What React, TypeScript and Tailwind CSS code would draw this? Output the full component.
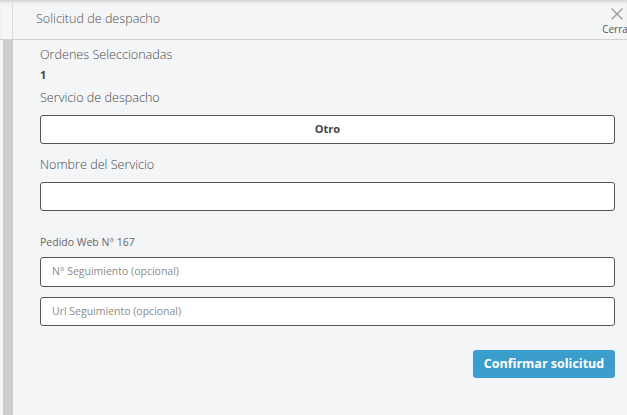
export default function App() {
  return (
    <div className="w-[627px] h-[415px] overflow-hidden bg-[#f4f5f7] text-[#5c5c5c] font-['Open_Sans',sans-serif] flex flex-col">
      {/* header */}
      <div className="h-[40px] shrink-0 flex border-b border-[#d2d2d2] shadow-[inset_0_3px_3px_-1px_rgba(0,0,0,0.14)]">
        <div className="w-[13px] h-full border-r border-[#d9d9d9] mt-[3px]" />
        <div className="flex-1 pl-[23px] pt-[10px] text-[12.6px] leading-[18px] font-light text-[#4f4f4f]">Solicitud de despacho</div>
        <div className="w-[30px] shrink-0 -mr-[5px] flex flex-col items-center pt-[8px]">
          <svg width="12" height="12" viewBox="0 0 12 12" fill="none" stroke="#9a9a9a" strokeWidth="1.3">
            <path d="M0.5 0.5 L11.5 11.5 M11.5 0.5 L0.5 11.5" />
          </svg>
          <span className="text-[10px] leading-[13px] mt-[3px] text-[#555]">Cerrar</span>
        </div>
      </div>

      {/* body */}
      <div className="flex-1 flex">
        <div className="w-[3px]" />
        <div className="w-[10px] bg-[#cccccc]" />
        <div className="flex-1 pl-[27px] pr-[12px] pt-[6px] flex flex-col">
          <div className="text-[12.6px] leading-[18px] font-light text-[#4a4a4a]">Ordenes Seleccionadas</div>
          <div className="text-[11px] leading-[14px] font-bold text-[#444] mt-[4px]">1</div>
          <div className="text-[12.6px] leading-[18px] font-light text-[#4a4a4a] mt-[7px]">Servicio de despacho</div>
          <div className="mt-[8px] h-[29px] bg-white border border-[#555] rounded-[3px] flex items-center justify-center text-[11px] font-bold text-[#444]">
            Otro
          </div>
          <div className="text-[12.6px] leading-[18px] font-light text-[#4a4a4a] mt-[12px]">Nombre del Servicio</div>
          <div className="mt-[8px] h-[29px] bg-white border border-[#555] rounded-[3px]" />
          <div className="text-[10.5px] leading-[14px] mt-[24px] text-[#666]">Pedido Web N° 167</div>
          <div className="mt-[8px] h-[30px] bg-white border border-[#555] rounded-[3px] flex items-center pl-[11px] text-[10.5px] text-[#8a8a8a]">
            N° Seguimiento (opcional)
          </div>
          <div className="mt-[10px] h-[29px] bg-white border border-[#555] rounded-[3px] flex items-center pl-[11px] text-[10.5px] text-[#8a8a8a]">
            Url Seguimiento (opcional)
          </div>
          <div className="mt-[24px] flex justify-end">
            <button className="h-[28px] w-[142px] rounded-[3px] bg-[#3b9dcc] text-white text-[12.5px] font-bold">
              Confirmar solicitud
            </button>
          </div>
        </div>
      </div>
    </div>
  )
}
